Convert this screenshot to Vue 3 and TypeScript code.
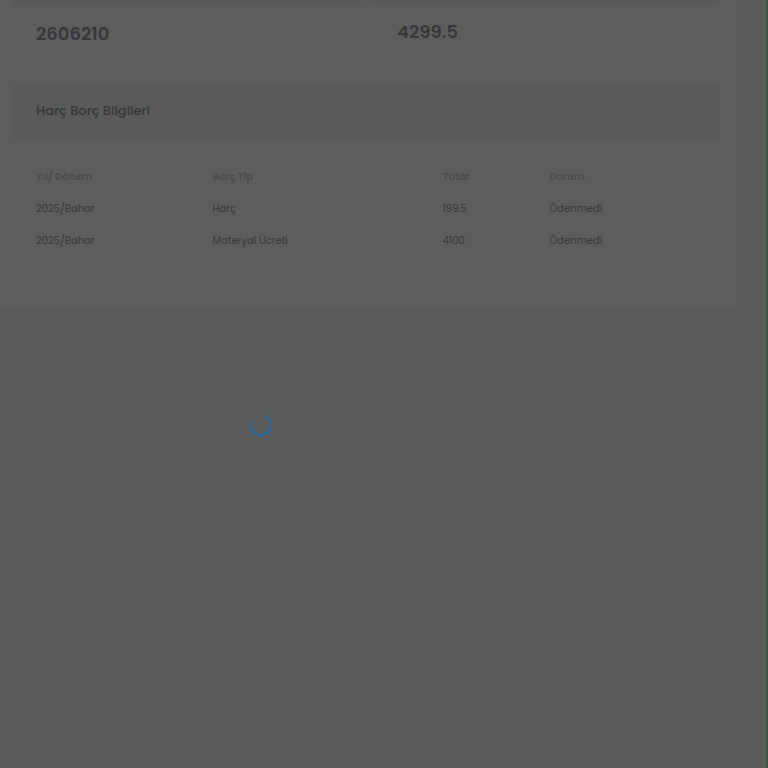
<script setup lang="ts">
interface Debt {
  term: string
  type: string
  amount: string
  status: string
}

const studentNumber = '2606210'
const totalDebt = '4299.5'

const columns: string[] = ['Yıl/ Dönem', 'Borç Tip', 'Tutar', 'Durum']

const debts: Debt[] = [
  { term: '2025/Bahar', type: 'Harç', amount: '199.5', status: 'Ödenmedi' },
  { term: '2025/Bahar', type: 'Materyal Ücreti', amount: '4100', status: 'Ödenmedi' },
]
</script>

<template>
  <div class="page">
    <main class="card">
      <section class="totals">
        <div class="total">
          <strong>{{ studentNumber }}</strong>
        </div>
        <div class="total total-amount">
          <strong>{{ totalDebt }}</strong>
        </div>
      </section>
      <section>
        <h2 class="band">Harç Borç Bilgileri</h2>
        <table class="debts">
          <colgroup>
            <col class="col-term" />
            <col class="col-type" />
            <col class="col-amount" />
            <col />
          </colgroup>
          <thead>
            <tr>
              <th v-for="column in columns" :key="column" scope="col">{{ column }}</th>
            </tr>
          </thead>
          <tbody>
            <tr v-for="debt in debts" :key="debt.type">
              <td>{{ debt.term }}</td>
              <td>{{ debt.type }}</td>
              <td>{{ debt.amount }}</td>
              <td>{{ debt.status }}</td>
            </tr>
          </tbody>
        </table>
      </section>
    </main>
    <div class="overlay" role="status">
      <svg class="spinner" viewBox="0 0 24 24" fill="none" stroke="#2d6ba8">
        <path d="M3.3 7A10 10 0 1 0 17 3.4" stroke-width="1.8" />
        <path d="M3.3 17A10 10 0 0 0 22 12" stroke-width="2.2" />
      </svg>
    </div>
  </div>
</template>

<style>
body {
  margin: 0;
  background: #5a5d5b;
}
</style>

<style scoped>
.page {
  position: relative;
  box-sizing: border-box;
  min-height: 100vh;
  padding-right: 23px;
  border-right: 2px solid #28613d;
  background: #5a5d5b;
  color: #37373b;
  font-family: Poppins, Inter, "Liberation Sans", sans-serif;
}

.card {
  padding: 0 24px 51px 13px;
  border-radius: 0 0 8px 0;
  background: #5d5d5d;
  box-shadow: 0 0 0 7px #5c5b5b;
}

.totals {
  display: grid;
  grid-template-columns: 1fr 1fr;
  column-gap: 8px;
  height: 84px;
}

.total::before {
  display: block;
  height: 6px;
  margin-bottom: 16px;
  background: linear-gradient(#595959, #5b5b5b);
  content: "";
}

.total-amount::before {
  margin-bottom: 14px;
}

.total strong {
  display: block;
  padding-left: 23px;
  font-size: 18px;
  font-weight: 600;
  line-height: 24px;
}

.total-amount strong {
  padding-left: 27px;
}

.band {
  margin: 0 0 20px;
  padding: 15px 23px 17px;
  border: 1px solid #5a5c5b;
  border-left-width: 0;
  background: #585b59;
  font-size: 13px;
  font-weight: 500;
  line-height: 22px;
}

.debts {
  width: 100%;
  border-collapse: collapse;
  table-layout: fixed;
  font-size: 10px;
  line-height: 16px;
}

.col-term {
  width: 25%;
}

.col-type {
  width: 32.6%;
}

.col-amount {
  width: 15.1%;
}

.debts th,
.debts td {
  padding: 9px 0 7px 23px;
  text-align: left;
}

.debts th {
  color: #4b4b50;
  font-weight: 600;
}

.debts td {
  color: #39393a;
  font-weight: 400;
}

.overlay {
  position: absolute;
  inset: 0;
}

.spinner {
  position: absolute;
  top: 413px;
  left: 248px;
  width: 24px;
  height: 24px;
}
</style>
